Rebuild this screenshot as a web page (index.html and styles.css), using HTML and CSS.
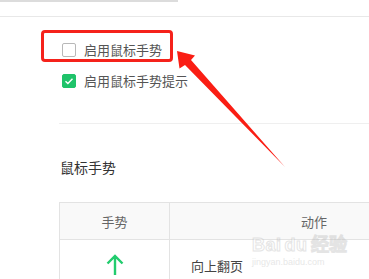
FILE: index.html
```html
<!DOCTYPE html>
<html lang="zh-CN">
<head>
    <meta charset="UTF-8">
    <meta name="viewport" content="width=device-width, initial-scale=1.0">
    <title>鼠标手势</title>
    <link rel="stylesheet" href="styles.css">
</head>
<body>
    <div class="topbar"></div>
    <div class="header"></div>
    <main>
        <div class="options">
            <label class="option">
                <span class="check"></span>
                启用鼠标手势
            </label>
            <label class="option">
                <span class="check checked">
                    <svg width="14" height="14" viewBox="0 0 14 14"><path d="M3.5 7.2l2.4 2.4 4.6-4.8" fill="none" stroke="#fff" stroke-width="1.4"/></svg>
                </span>
                启用鼠标手势提示
            </label>
        </div>
        <h2 class="title">鼠标手势</h2>
        <table class="gestures">
            <tr>
                <th class="col-gesture">手势</th>
                <th class="col-action">动作</th>
            </tr>
            <tr>
                <td class="col-gesture">
                    <svg width="18" height="22" viewBox="0 0 18 22"><path d="M9 21V2M1.5 9.5L9 2l7.5 7.5" fill="none" stroke="#22cc6e" stroke-width="2.4"/></svg>
                </td>
                <td class="col-action action">向上翻页</td>
            </tr>
        </table>
    </main>

    <div class="mark"></div>
    <svg class="pointer" width="369" height="279" viewBox="0 0 369 279">
        <path d="M177 51L195 55.5 191 60 285 167 185 65 179.5 68.5Z" fill="#fa1e14"/>
    </svg>

    <div class="watermark">
        <span class="wm-logo">Bai<b>du</b>经验</span>
        <span class="wm-url">jingyan.baidu.com</span>
    </div>
</body>
</html>
```

FILE: styles.css
```css
body {
    margin: 0;
    width: 369px;
    height: 279px;
    overflow: hidden;
    position: relative;
    background: #fff;
    font-family: "Noto Sans CJK SC", "Noto Sans", sans-serif;
    font-size: 13px;
    color: #555;
}
.topbar {
    width: 178px;
    height: 2px;
    background: #dcdcdc;
}
.header {
    height: 14px;
    border-bottom: 1px solid #e8e8e8;
}
main {
    padding-left: 59px;
}
.options {
    display: flex;
    flex-direction: column;
    gap: 17px;
    padding: 26px 0 35px 3px;
    border-bottom: 1px solid #efefef;
}
.option {
    display: flex;
    align-items: center;
    gap: 8px;
    height: 14px;
    line-height: 14px;
}
.check {
    box-sizing: border-box;
    width: 14px;
    height: 14px;
    border: 1px solid #b8b8b8;
    border-radius: 2px;
    display: flex;
}
.check.checked {
    background: #1fc36a;
    border-color: #1fc36a;
}
.check svg {
    margin: -1px;
}
.title {
    margin: 33px 0 25px 1px;
    font-size: 14px;
    font-weight: normal;
    line-height: 20px;
    color: #333;
}
.gestures {
    table-layout: fixed;
    width: 400px;
    border-collapse: collapse;
    border: 1px solid #e3e3e3;
}
.gestures th, .gestures td {
    border: 1px solid #e3e3e3;
    padding: 0;
}
.gestures th {
    height: 36px;
    background: #f9f9f9;
    font-weight: normal;
    color: #666;
}
.gestures td {
    height: 40px;
    vertical-align: top;
}
.col-gesture {
    width: 109px;
    text-align: center;
}
.col-gesture svg {
    display: block;
    margin: 14px auto 0;
}
.action {
    padding: 16px 0 0 21px !important;
    color: #444;
}
.mark {
    position: absolute;
    left: 41px;
    top: 30px;
    width: 126px;
    height: 26px;
    border: 3px solid #f5221b;
    border-radius: 4px;
}
.pointer {
    position: absolute;
    left: 0;
    top: 0;
}
.watermark {
    position: absolute;
    left: 252px;
    top: 230px;
    display: flex;
    flex-direction: column;
    font-family: "Liberation Sans", sans-serif;
    opacity: 0.4;
}
.wm-logo {
    font-size: 18px;
    font-weight: bold;
    color: #fff;
    -webkit-text-stroke: 1px #bdbdbd;
    letter-spacing: 0.5px;
}
.wm-logo b {
    margin: 0 3px;
}
.wm-url {
    font-size: 9px;
    color: #c4c4c4;
    margin-top: 1px;
}
```
